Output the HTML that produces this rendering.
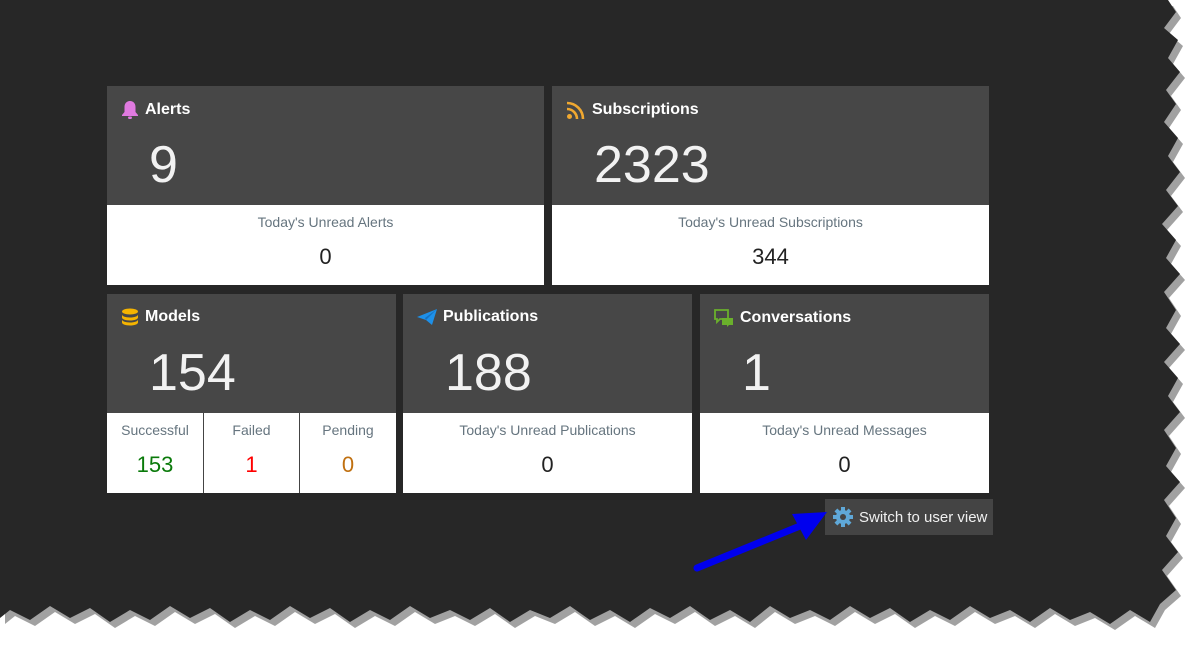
<!DOCTYPE html>
<html><head><meta charset="utf-8"><style>
*{margin:0;padding:0;box-sizing:border-box}
body{width:1195px;height:654px;background:#fff;position:relative;overflow:hidden;font-family:"Segoe UI","Liberation Sans",sans-serif}
.t{position:absolute;background:#fff}
.h{position:absolute;left:0;top:0;right:0;background:#474747}
.ti{position:absolute;left:14px;top:14px;color:#fff;font-weight:bold;font-size:16px;display:flex;align-items:center;gap:6px}
.big{position:absolute;left:42px;top:49px;color:#f2f2f2;font-size:52px;font-weight:300;line-height:60px}
.lb{position:absolute;left:0;right:0;text-align:center;color:#66757f;font-size:14px}
.v{position:absolute;left:0;right:0;text-align:center;color:#222;font-size:22px}
</style></head><body>
<svg width="1195" height="654" style="position:absolute;left:0;top:0">
<polygon fill="#8a8a8a" opacity="0.8" transform="translate(5,6)" points="0,0 1168,0 1176,12 1164,28 1178,40 1168,58 1180,72 1166,90 1176,104 1164,122 1178,138 1168,156 1180,172 1166,190 1178,206 1162,224 1176,240 1166,258 1180,274 1164,292 1176,310 1166,328 1180,344 1164,362 1178,378 1168,396 1180,412 1164,430 1176,448 1166,466 1180,482 1164,500 1176,518 1166,536 1178,552 1162,570 1176,590 1160,604 1150,622 1130,610 1110,624 1090,612 1070,620 1050,608 1030,622 1010,610 990,618 970,606 950,620 930,610 910,622 890,608 870,618 850,606 830,620 810,610 790,618 770,606 750,622 730,610 710,620 690,606 670,618 650,608 630,622 610,610 590,620 570,606 550,618 530,610 510,622 490,608 470,620 450,610 430,618 410,606 390,620 370,610 350,622 330,608 310,618 290,606 270,620 250,610 230,622 210,608 190,618 170,606 150,620 130,610 110,622 90,608 70,618 50,606 30,620 10,610 0,618"/>
<polygon fill="#272727" points="0,0 1168,0 1176,12 1164,28 1178,40 1168,58 1180,72 1166,90 1176,104 1164,122 1178,138 1168,156 1180,172 1166,190 1178,206 1162,224 1176,240 1166,258 1180,274 1164,292 1176,310 1166,328 1180,344 1164,362 1178,378 1168,396 1180,412 1164,430 1176,448 1166,466 1180,482 1164,500 1176,518 1166,536 1178,552 1162,570 1176,590 1160,604 1150,622 1130,610 1110,624 1090,612 1070,620 1050,608 1030,622 1010,610 990,618 970,606 950,620 930,610 910,622 890,608 870,618 850,606 830,620 810,610 790,618 770,606 750,622 730,610 710,620 690,606 670,618 650,608 630,622 610,610 590,620 570,606 550,618 530,610 510,622 490,608 470,620 450,610 430,618 410,606 390,620 370,610 350,622 330,608 310,618 290,606 270,620 250,610 230,622 210,608 190,618 170,606 150,620 130,610 110,622 90,608 70,618 50,606 30,620 10,610 0,618"/>
</svg>

<div class="t" style="left:107px;top:86px;width:437px;height:199px">
<div class="h" style="height:119px"><div class="ti"><svg width="18" height="20" viewBox="0 0 18 20"><path d="M9 1c-3.5 0-5.5 2.5-5.5 6v5L1 15v1h16v-1l-2.5-3V7c0-3.5-2-6-5.5-6z" fill="#e07ae0"/><rect x="7" y="16.5" width="4" height="2.5" rx="1.2" fill="#e07ae0"/></svg>Alerts</div><div class="big">9</div></div>
<div class="lb" style="top:128px">Today's Unread Alerts</div><div class="v" style="top:158px">0</div></div>

<div class="t" style="left:552px;top:86px;width:437px;height:199px">
<div class="h" style="height:119px"><div class="ti"><svg width="20" height="20" viewBox="0 0 20 20"><circle cx="3.5" cy="16.5" r="2.5" fill="#f0a830"/><path d="M1 9a10 10 0 0 1 10 10" stroke="#f0a830" stroke-width="2.6" fill="none"/><path d="M1 3a16 16 0 0 1 16 16" stroke="#f0a830" stroke-width="2.6" fill="none"/></svg>Subscriptions</div><div class="big">2323</div></div>
<div class="lb" style="top:128px">Today's Unread Subscriptions</div><div class="v" style="top:158px">344</div></div>

<div class="t" style="left:107px;top:294px;width:289px;height:199px">
<div class="h" style="height:119px"><div class="ti"><svg width="18" height="18" viewBox="0 0 18 18" fill="#f5b400"><ellipse cx="9" cy="3.5" rx="8" ry="3"/><path d="M1 6.5c0 1.7 3.6 3 8 3s8-1.3 8-3v3c0 1.7-3.6 3-8 3s-8-1.3-8-3z"/><path d="M1 11.5c0 1.7 3.6 3 8 3s8-1.3 8-3v3c0 1.7-3.6 3-8 3s-8-1.3-8-3z"/></svg>Models</div><div class="big">154</div></div>
<div style="position:absolute;left:96px;top:119px;width:1px;height:80px;background:#444"></div>
<div style="position:absolute;left:192px;top:119px;width:1px;height:80px;background:#444"></div>
<div class="lb" style="top:128px;left:0;right:auto;width:96px">Successful</div><div class="v" style="top:158px;left:0;right:auto;width:96px;color:#0a7a0a">153</div>
<div class="lb" style="top:128px;left:97px;right:auto;width:95px">Failed</div><div class="v" style="top:158px;left:97px;right:auto;width:95px;color:#f00">1</div>
<div class="lb" style="top:128px;left:193px;right:auto;width:96px">Pending</div><div class="v" style="top:158px;left:193px;right:auto;width:96px;color:#c07010">0</div></div>

<div class="t" style="left:403px;top:294px;width:289px;height:199px">
<div class="h" style="height:119px"><div class="ti"><svg width="20" height="18" viewBox="0 0 20 18"><path d="M0 9L20 1 15 17 9 12z" fill="#1e90e8"/><path d="M9 12l11-11-12 9z" fill="#1570c0"/></svg>Publications</div><div class="big">188</div></div>
<div class="lb" style="top:128px">Today's Unread Publications</div><div class="v" style="top:158px">0</div></div>

<div class="t" style="left:700px;top:294px;width:289px;height:199px">
<div class="h" style="height:119px"><div class="ti"><svg width="20" height="20" viewBox="0 0 20 20"><path d="M1 2h13v9H6l-3 3v-3H1z" fill="none" stroke="#6ab02c" stroke-width="1.8"/><path d="M8 10h11v7h-4l-2 2v-2H8z" fill="#6ab02c"/></svg>Conversations</div><div class="big">1</div></div>
<div class="lb" style="top:128px">Today's Unread Messages</div><div class="v" style="top:158px">0</div></div>

<div style="position:absolute;left:825px;top:499px;width:168px;height:36px;background:#444;color:#f0f0f0;font-size:15px;display:flex;align-items:center;padding-left:8px;gap:6px">
<svg width="20" height="20" viewBox="0 0 20 20"><g fill="#5fa8d8"><circle cx="10" cy="10" r="7"/><rect x="8" y="0" width="4" height="20"/><rect x="0" y="8" width="20" height="4"/><rect x="8" y="0" width="4" height="20" transform="rotate(45 10 10)"/><rect x="8" y="0" width="4" height="20" transform="rotate(-45 10 10)"/></g><circle cx="10" cy="10" r="3" fill="#444"/></svg>Switch to user view</div>

<svg width="1195" height="654" style="position:absolute;left:0;top:0;pointer-events:none">
<line x1="697" y1="568" x2="800" y2="526" stroke="#0000ee" stroke-width="7" stroke-linecap="round"/>
<polygon points="827,512 792,514 806,540" fill="#0000ee"/>
</svg>
</body></html>
